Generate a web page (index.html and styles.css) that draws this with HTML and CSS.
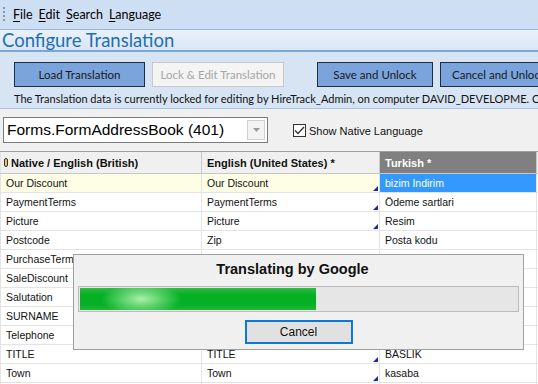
FILE: index.html
```html
<!DOCTYPE html>
<html>
<head>
<meta charset="utf-8">
<link rel="stylesheet" href="styles.css">
</head>
<body>
<div class="app">
  <div class="menubar">
    <span class="grip"></span>
    <span class="menu"><u>F</u>ile</span>
    <span class="menu"><u>E</u>dit</span>
    <span class="menu"><u>S</u>earch</span>
    <span class="menu"><u>L</u>anguage</span>
  </div>
  <div class="titlebar">Configure Translation</div>
  <div class="toolbar">
    <div class="buttons">
      <button class="btn blue w131">Load Translation</button>
      <button class="btn disabled w132">Lock &amp; Edit Translation</button>
      <button class="btn blue w115 gapl">Save and Unlock</button>
      <button class="btn blue w110">Cancel and Unlock</button>
    </div>
    <div class="info">The Translation data is currently locked for editing by HireTrack_Admin, on computer DAVID_DEVELOPME. Only</div>
  </div>
  <div class="filters">
    <div class="combo">
      <span class="combo-text">Forms.FormAddressBook (401)</span>
      <span class="combo-btn"><svg width="7" height="4" viewBox="0 0 7 4"><path d="M0 0h7L3.5 4z" fill="#9a9a9a"/></svg></span>
    </div>
    <label class="check">
      <span class="box"><svg width="11" height="9" viewBox="0 0 11 9"><path d="M1 4.5l3 3 6-6.5" fill="none" stroke="#333" stroke-width="1.3"/></svg></span>
      Show Native Language
    </label>
  </div>
  <div class="grid">
    <div class="row head">
      <div class="cell c1"><span class="clip"></span>Native / English (British)</div>
      <div class="cell c2">English (United States) *</div>
      <div class="cell c3 dark">Turkish *</div>
    </div>
    <div class="row cur">
      <div class="cell c1">Our Discount</div>
      <div class="cell c2 tri">Our Discount</div>
      <div class="cell c3 sel">bizim Indirim</div>
    </div>
    <div class="row">
      <div class="cell c1">PaymentTerms</div>
      <div class="cell c2 tri">PaymentTerms</div>
      <div class="cell c3">Ödeme sartlari</div>
    </div>
    <div class="row">
      <div class="cell c1">Picture</div>
      <div class="cell c2 tri">Picture</div>
      <div class="cell c3">Resim</div>
    </div>
    <div class="row">
      <div class="cell c1">Postcode</div>
      <div class="cell c2">Zip</div>
      <div class="cell c3">Posta kodu</div>
    </div>
    <div class="row">
      <div class="cell c1">PurchaseTerms</div>
      <div class="cell c2">PurchaseTerms</div>
      <div class="cell c3">Satin alma</div>
    </div>
    <div class="row">
      <div class="cell c1">SaleDiscount</div>
      <div class="cell c2">SaleDiscount</div>
      <div class="cell c3">Satis indirimi</div>
    </div>
    <div class="row">
      <div class="cell c1">Salutation</div>
      <div class="cell c2">Salutation</div>
      <div class="cell c3">Selamlama</div>
    </div>
    <div class="row">
      <div class="cell c1">SURNAME</div>
      <div class="cell c2">SURNAME</div>
      <div class="cell c3">SOYADI</div>
    </div>
    <div class="row">
      <div class="cell c1">Telephone</div>
      <div class="cell c2">Telephone</div>
      <div class="cell c3">Telefon</div>
    </div>
    <div class="row">
      <div class="cell c1">TITLE</div>
      <div class="cell c2 tri">TITLE</div>
      <div class="cell c3">BASLIK</div>
    </div>
    <div class="row">
      <div class="cell c1">Town</div>
      <div class="cell c2 tri">Town</div>
      <div class="cell c3">kasaba</div>
    </div>
    <div class="row">
      <div class="cell c1"></div>
      <div class="cell c2"></div>
      <div class="cell c3"></div>
    </div>
  </div>

  <div class="dialog">
    <div class="dlg-title">Translating by Google</div>
    <div class="progress"><div class="fill" style="width:54%"></div></div>
    <div class="dlg-actions"><button class="cancel">Cancel</button></div>
  </div>
</div>
</body>
</html>
```
FILE: styles.css
```css
* { box-sizing: border-box; }
html, body { margin: 0; padding: 0; }
body {
  width: 538px; height: 384px; overflow: hidden;
  background: #f0f0f0;
  font-family: Lato, "Open Sans", sans-serif;
}
.app { position: relative; width: 538px; height: 384px; overflow: hidden; }

.menubar {
  height: 30px;
  background: #cfdff3;
  border-bottom: 1px solid #90b4dc;
  display: flex; align-items: center;
  padding: 0 0 0 3px;
  font-size: 12.5px; color: #000;
}
.grip {
  width: 2px; height: 16px; margin-right: 8px;
  background: repeating-linear-gradient(to bottom, #8a98ad 0 2px, transparent 2px 4px);
}
.menu { margin-right: 6px; }
.menu u { text-decoration: underline; text-underline-offset: 2px; }

.titlebar {
  height: 22px;
  background: linear-gradient(#eaf1fa, #dae6f5);
  border-bottom: 2px solid #7aa8d6;
  color: #1e6fb4;
  font-size: 18.5px; line-height: 20px;
  padding-left: 2px;
}

.toolbar {
  height: 57px;
  background: #d6e4f4;
  border-bottom: 1px solid #a8c4e2;
  padding: 10px 0 0 14px;
  overflow: hidden;
}
.buttons { display: flex; gap: 7px; height: 25px; }
.btn {
  flex-shrink: 0;
  height: 25px; margin: 0; padding: 0;
  font-family: inherit; font-size: 11.5px;
  white-space: nowrap; overflow: hidden;
}
.btn.blue { background: #7ba3dc; border: 1px solid #1e2c44; color: #1a1a1a; }
.btn.disabled { background: #f4f4f4; border: 1px solid #c8c8c8; color: #a6a6a6; }
.w131 { width: 131px; } .w132 { width: 132px; }
.w115 { width: 116px; } .w110 { width: 110px; }
.btn.w110 { text-align: left; padding-left: 11px; }
.gapl { margin-left: 26px; }
.info {
  margin-top: 5px; font-size: 11px; white-space: nowrap; color: #111;
}

.filters {
  height: 42px; display: flex; align-items: flex-start;
  padding: 8px 0 0 3px;
}
.combo {
  width: 265px; height: 26px;
  border: 1px solid #7a7a7a; background: #fff;
  display: flex; align-items: center;
  padding: 0 2px 0 3px;
  font-family: "Liberation Sans", Arial, sans-serif; font-size: 15.5px;
}
.combo-text { flex: 1; }
.combo-btn {
  width: 18px; height: 20px; border: 1px solid #d0d0d0; background: #f3f3f3;
  display: flex; align-items: center; justify-content: center;
}
.check {
  display: flex; align-items: center; margin: 7px 0 0 25px;
  font-family: "Liberation Sans", Arial, sans-serif; font-size: 11px; color: #111;
}
.box {
  width: 13px; height: 13px; border: 1px solid #333; background: #fff;
  margin-right: 3px; display: flex; align-items: center; justify-content: center;
}

.grid {
  border-top: 1px solid #a0a0a0;
  background: #fff;
  font-family: "Liberation Sans", Arial, sans-serif; font-size: 10.5px; color: #111;
}
.row { display: flex; height: 19px; border-bottom: 1px solid #e3e3e3; }
.row.head { height: 22px; background: #f0f0f0; border-bottom: 1px solid #c8c8c8; font-weight: bold; font-size: 11px; }
.row.cur { background: #fefee6; }
.cell {
  height: 100%; display: flex; align-items: center;
  padding-left: 5px; border-right: 1px solid #e3e3e3; position: relative;
  white-space: nowrap; overflow: hidden;
}
.head .cell { border-right: 1px solid #c8c8c8; }
.c1 { width: 202px; border-left: 1px solid #e3e3e3; }
.c2 { width: 178px; }
.c3 { width: 157px; }
.cell.dark { background: #808080; color: #fff; }
.cell.sel { background: #3399ff; color: #fff; }
.tri::after {
  content: ""; position: absolute; right: 1px; bottom: 1px;
  border-left: 5px solid transparent; border-bottom: 5px solid #1b2aa0;
}
.clip {
  width: 4px; height: 9px; border: 1.5px solid #333; border-radius: 2px;
  background: #e8c060; margin-right: 3px; margin-left: -2px;
}

.dialog {
  position: absolute; left: 73px; top: 254px; width: 451px; height: 96px;
  background: #f0f0f0; border: 1px solid #a0a0a0;
  padding: 4px 4px 0 4px;
}
.dlg-title {
  text-align: center; font-family: "Liberation Sans", Arial, sans-serif;
  font-weight: bold; font-size: 14.5px; height: 22px; line-height: 20px; color: #111;
  padding-right: 12px;
}
.progress {
  margin-top: 5px; height: 26px; border: 1px solid #bcbcbc; background: #e6e6e6;
  padding: 1px;
}
.fill {
  height: 100%;
  background:
    radial-gradient(ellipse 40px 16px at 26% 50%, rgba(180,245,180,0.95), rgba(180,245,180,0) 100%),
    linear-gradient(#30bb44, #06b025 30%, #06b025 75%, #22b83a);
}
.dlg-actions { display: flex; justify-content: center; margin-top: 8px; }
.cancel {
  width: 108px; height: 24px; margin: 0;
  background: #e1e1e1; border: 2px solid #0a78d7;
  font-family: "Liberation Sans", Arial, sans-serif; font-size: 12px; color: #111;
}
```
